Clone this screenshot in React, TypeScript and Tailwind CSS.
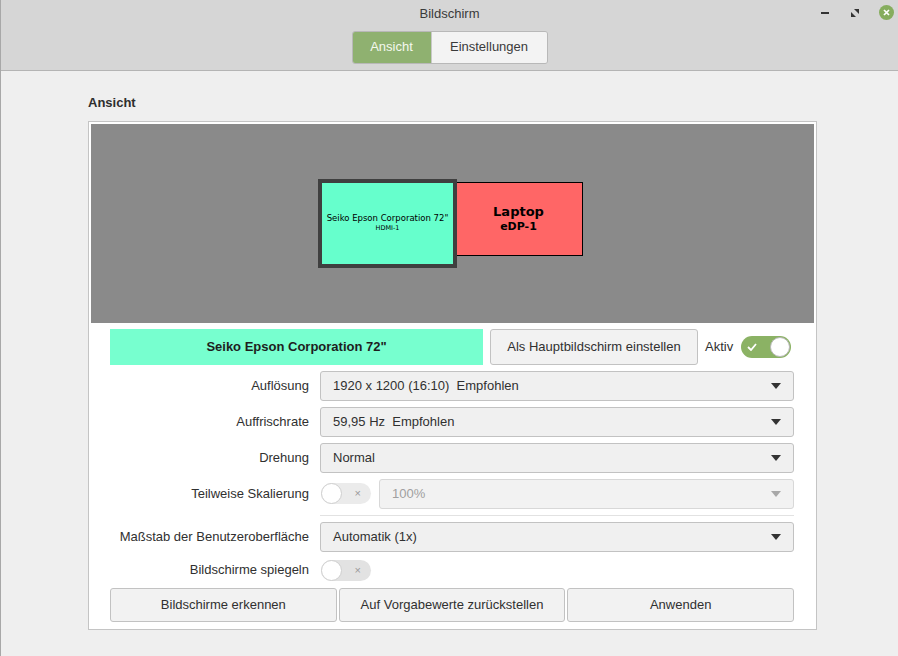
import React from "react";

function Caret({ disabled }: { disabled?: boolean }) {
  return (
    <svg width="10" height="6" viewBox="0 0 10 6" className="shrink-0">
      <path d="M0 0 L10 0 L5 6 Z" fill={disabled ? "#a8a8a8" : "#333333"} />
    </svg>
  );
}

function Combo({ value, disabled }: { value: string; disabled?: boolean }) {
  return (
    <div
      className={`flex h-[30px] flex-1 items-center justify-between rounded-[3px] border px-3 pr-[12px] ${
        disabled
          ? "border-[#d8d8d8] bg-[#f2f2f2] text-[#a0a0a0]"
          : "border-[#c2c2c2] bg-[#f0f0f0] text-[#303030]"
      }`}
    >
      <span className="whitespace-pre">{value}</span>
      <Caret disabled={disabled} />
    </div>
  );
}

function Toggle({ on, disabled }: { on?: boolean; disabled?: boolean }) {
  if (on) {
    return (
      <div className="flex h-[22px] w-[50px] items-center justify-between rounded-full bg-[#8bb264] pl-[6px] pr-[1px]">
        <svg width="10" height="8" viewBox="0 0 10 8">
          <path d="M1 4 L4 7 L9 1" stroke="white" strokeWidth="1.8" fill="none" />
        </svg>
        <div className="h-[20px] w-[20px] rounded-full border border-[#b8b8b8] bg-white" />
      </div>
    );
  }
  return (
    <div
      className={`flex h-[21px] w-[50px] shrink-0 items-center justify-between rounded-full pr-[10px] ${
        disabled ? "bg-[#ebebeb]" : "bg-[#e2e2e2]"
      }`}
    >
      <div className="h-[21px] w-[21px] rounded-full border border-[#cfcfcf] bg-white" />
      <span className="text-[11px] leading-none text-[#9a9a9a]">×</span>
    </div>
  );
}

function Label({ children }: { children: React.ReactNode }) {
  return <div className="w-[199px] shrink-0 text-right text-[#303030]">{children}</div>;
}

export default function App() {
  return (
    <div className="flex h-[656px] w-[898px] flex-col overflow-hidden border-l border-[#a8a8a8] bg-[#efefef] font-['Liberation_Sans',sans-serif] text-[13px] text-[#303030]">
      <header className="relative flex h-[71px] shrink-0 flex-col items-center border-b border-[#b4b4b4] bg-[#d6d6d6]">
        <div className="mt-[4px] text-[13px] text-[#3a3a3a]">Bildschirm</div>
        <div className="mt-[7px] flex h-[33px] overflow-hidden rounded-[3px] border border-[#b8b8b8]">
          <div className="flex w-[78px] items-center justify-center bg-[#8fb170] text-[#f4f8ee]">Ansicht</div>
          <div className="flex w-[116px] items-center justify-center border-l border-[#c8c8c8] bg-[#f3f3f3] text-[#3a3a3a]">
            Einstellungen
          </div>
        </div>
        <div className="absolute right-[4px] top-[5px] flex items-center">
          <div className="h-[2px] w-[8px] bg-[#333]" />
          <svg width="8" height="8" viewBox="0 0 8 8" className="ml-[22px]">
            <path d="M3 0 L8 0 L8 5 Z" fill="#333" />
            <path d="M0 3 L0 8 L5 8 Z" fill="#333" />
          </svg>
          <div className="ml-[20px] flex h-[15px] w-[15px] items-center justify-center rounded-full bg-[#86ad5e]">
            <svg width="7" height="7" viewBox="0 0 7 7">
              <path d="M1 1 L6 6 M6 1 L1 6" stroke="white" strokeWidth="1.7" />
            </svg>
          </div>
        </div>
      </header>

      <main className="flex flex-1 flex-col pl-[87px] pt-[22px]">
        <h2 className="mb-[8px] text-[13px] font-bold text-[#2e2e2e]">Ansicht</h2>

        <section className="flex h-[509px] w-[729px] flex-col border border-[#c4c4c4] bg-white p-[2px]">
          <div className="relative h-[199px] shrink-0 bg-[#8a8a8a]">
            <div className="absolute left-[363px] top-[58px] flex h-[74px] w-[129px] flex-col items-center justify-center border border-black bg-[#ff6666] font-['DejaVu_Sans',sans-serif] font-bold text-black">
              <div className="text-[13px] leading-[16px]">Laptop</div>
              <div className="text-[11px] leading-[14px]">eDP-1</div>
            </div>
            <div className="absolute left-[227px] top-[55px] flex h-[89px] w-[139px] flex-col items-center justify-center border-[4px] border-[#3f3f3f] bg-[#66ffcc] text-black">
              <div className="font-['DejaVu_Sans',sans-serif] text-[8.5px] leading-[11px]">
                Seiko Epson Corporation 72"
              </div>
              <div className="font-['DejaVu_Sans',sans-serif] text-[6.5px] leading-[9px]">HDMI-1</div>
            </div>
          </div>

          <div className="flex flex-1 flex-col pl-[19px] pr-[20px] pt-[6px]">
            <div className="flex h-[36px] items-center">
              <div className="flex h-[36px] w-[373px] items-center justify-center bg-[#77ffcf] font-bold text-[#1e1e1e]">
                Seiko Epson Corporation 72"
              </div>
              <div className="ml-[7px] flex h-[36px] w-[208px] items-center justify-center rounded-[3px] border border-[#c2c2c2] bg-[#f2f2f2]">
                Als Hauptbildschirm einstellen
              </div>
              <div className="ml-[7px] mr-[8px]">Aktiv</div>
              <Toggle on />
            </div>

            <div className="mt-[6px] flex flex-col gap-[6px]">
              <div className="flex items-center gap-[11px]">
                <Label>Auflösung</Label>
                <Combo value="1920 x 1200 (16:10)  Empfohlen" />
              </div>
              <div className="flex items-center gap-[11px]">
                <Label>Auffrischrate</Label>
                <Combo value="59,95 Hz  Empfohlen" />
              </div>
              <div className="flex items-center gap-[11px]">
                <Label>Drehung</Label>
                <Combo value="Normal" />
              </div>
              <div className="flex items-center gap-[11px]">
                <Label>Teilweise Skalierung</Label>
                <div className="ml-[1px] flex flex-1 items-center gap-[8px]">
                  <Toggle disabled />
                  <Combo value="100%" disabled />
                </div>
              </div>
            </div>

            <div className="ml-[210px] mt-[6px] border-t border-[#e2e2e2]" />

            <div className="mt-[6px] flex items-center gap-[11px]">
              <Label>Maßstab der Benutzeroberfläche</Label>
              <Combo value="Automatik (1x)" />
            </div>

            <div className="mt-[8px] flex items-center gap-[11px]">
              <Label>Bildschirme spiegeln</Label>
              <div className="ml-[1px]">
                <Toggle />
              </div>
            </div>

            <div className="mt-[7px] flex gap-[2px]">
              {["Bildschirme erkennen", "Auf Vorgabewerte zurückstellen", "Anwenden"].map((t) => (
                <div
                  key={t}
                  className="flex h-[34px] flex-1 items-center justify-center rounded-[3px] border border-[#c2c2c2] bg-[#f2f2f2]"
                >
                  {t}
                </div>
              ))}
            </div>
          </div>
        </section>
      </main>
    </div>
  );
}
